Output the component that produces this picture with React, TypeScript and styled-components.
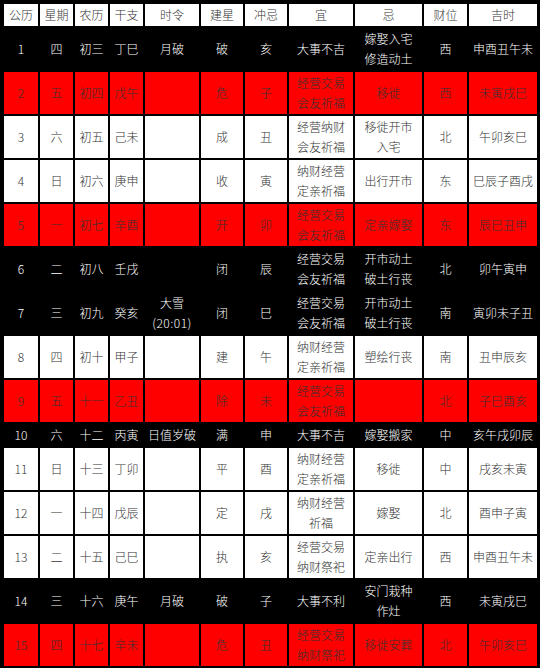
import React from "react";
import styled, { createGlobalStyle } from "styled-components";

const GlobalStyle = createGlobalStyle`
  html, body {
    margin: 0;
    padding: 0;
    background: #000;
  }
  body {
    font-family: "Noto Sans CJK SC", "Noto Sans", sans-serif;
  }
`;

type Tone = "black" | "red" | "white";

const Page = styled.div`
  padding: 2px 0 0 2px;
  background: #000;
`;

const Table = styled.table`
  border-collapse: separate;
  border-spacing: 2px;
  table-layout: fixed;
  width: 537px;
  background: #000;
`;

const Col = styled.col<{ $w: number }>`
  width: ${(p) => p.$w}px;
`;

const HeadCell = styled.th`
  background: #fff;
  color: #333;
  font-weight: 300;
  font-size: 12px;
  line-height: 20px;
  padding: 1px 0;
  text-align: center;
  vertical-align: middle;
  white-space: nowrap;
`;

const toneBg: Record<Tone, string> = {
  black: "#000",
  red: "#ff0000",
  white: "#fff",
};

const toneFg: Record<Tone, string> = {
  black: "#fff",
  red: "#333",
  white: "#333",
};

const Cell = styled.td<{ $tone: Tone }>`
  background: ${(p) => toneBg[p.$tone]};
  color: ${(p) => toneFg[p.$tone]};
  font-size: 12px;
  font-weight: 300;
  line-height: 20px;
  padding: 1px 0;
  text-align: center;
  vertical-align: middle;
  white-space: nowrap;
  overflow: hidden;
`;

const Paren = styled.span`
  letter-spacing: 0.5px;
`;

const widths = [34, 33, 33, 33, 54, 42, 42, 64, 67, 43, 68];
const headers = ["公历", "星期", "农历", "干支", "时令", "建星", "冲忌", "宜", "忌", "财位", "吉时"];

type Row = { tone: Tone; cells: string[] };

const rows: Row[] = [
  { tone: "black", cells: ["1", "四", "初三", "丁巳", "月破", "破", "亥", "大事不吉", "嫁娶入宅|修造动土", "西", "申酉丑午未"] },
  { tone: "red", cells: ["2", "五", "初四", "戊午", "", "危", "子", "经营交易|会友祈福", "移徙", "西", "未寅戌巳"] },
  { tone: "white", cells: ["3", "六", "初五", "己未", "", "成", "丑", "经营纳财|会友祈福", "移徙开市|入宅", "北", "午卯亥巳"] },
  { tone: "white", cells: ["4", "日", "初六", "庚申", "", "收", "寅", "纳财经营|定亲祈福", "出行开市", "东", "巳辰子酉戌"] },
  { tone: "red", cells: ["5", "一", "初七", "辛酉", "", "开", "卯", "经营交易|会友祈福", "定亲嫁娶", "东", "辰巳丑申"] },
  { tone: "black", cells: ["6", "二", "初八", "壬戌", "", "闭", "辰", "经营交易|会友祈福", "开市动土|破土行丧", "北", "卯午寅申"] },
  { tone: "black", cells: ["7", "三", "初九", "癸亥", "大雪|(20:01)", "闭", "巳", "经营交易|会友祈福", "开市动土|破土行丧", "南", "寅卯未子丑"] },
  { tone: "white", cells: ["8", "四", "初十", "甲子", "", "建", "午", "纳财经营|定亲祈福", "塑绘行丧", "南", "丑申辰亥"] },
  { tone: "red", cells: ["9", "五", "十一", "乙丑", "", "除", "未", "经营交易|会友祈福", "", "北", "子巳酉亥"] },
  { tone: "black", cells: ["10", "六", "十二", "丙寅", "日值岁破", "满", "申", "大事不吉", "嫁娶搬家", "中", "亥午戌卯辰"] },
  { tone: "white", cells: ["11", "日", "十三", "丁卯", "", "平", "酉", "纳财经营|定亲祈福", "移徙", "中", "戌亥未寅"] },
  { tone: "white", cells: ["12", "一", "十四", "戊辰", "", "定", "戌", "纳财经营|祈福", "嫁娶", "北", "酉申子寅"] },
  { tone: "white", cells: ["13", "二", "十五", "己巳", "", "执", "亥", "经营交易|纳财祭祀", "定亲出行", "西", "申酉丑午未"] },
  { tone: "black", cells: ["14", "三", "十六", "庚午", "月破", "破", "子", "大事不利", "安门栽种|作灶", "西", "未寅戌巳"] },
  { tone: "red", cells: ["15", "四", "十七", "辛未", "", "危", "丑", "经营交易|纳财祭祀", "移徙安葬", "北", "午卯亥巳"] },
];

function Lines({ text }: { text: string }) {
  const parts = text.split("|");
  return (
    <>
      {parts.map((p, i) => (
        <React.Fragment key={i}>
          {i > 0 && <br />}
          {p.startsWith("(") ? <Paren>{p}</Paren> : p}
        </React.Fragment>
      ))}
    </>
  );
}

export default function App() {
  return (
    <>
      <GlobalStyle />
      <Page>
        <Table>
          <colgroup>
            {widths.map((w, i) => (
              <Col key={i} $w={w} />
            ))}
          </colgroup>
          <thead>
            <tr>
              {headers.map((h) => (
                <HeadCell key={h}>{h}</HeadCell>
              ))}
            </tr>
          </thead>
          <tbody>
            {rows.map((r, ri) => (
              <tr key={ri}>
                {r.cells.map((c, ci) => (
                  <Cell key={ci} $tone={r.tone}>
                    <Lines text={c} />
                  </Cell>
                ))}
              </tr>
            ))}
          </tbody>
        </Table>
      </Page>
    </>
  );
}
